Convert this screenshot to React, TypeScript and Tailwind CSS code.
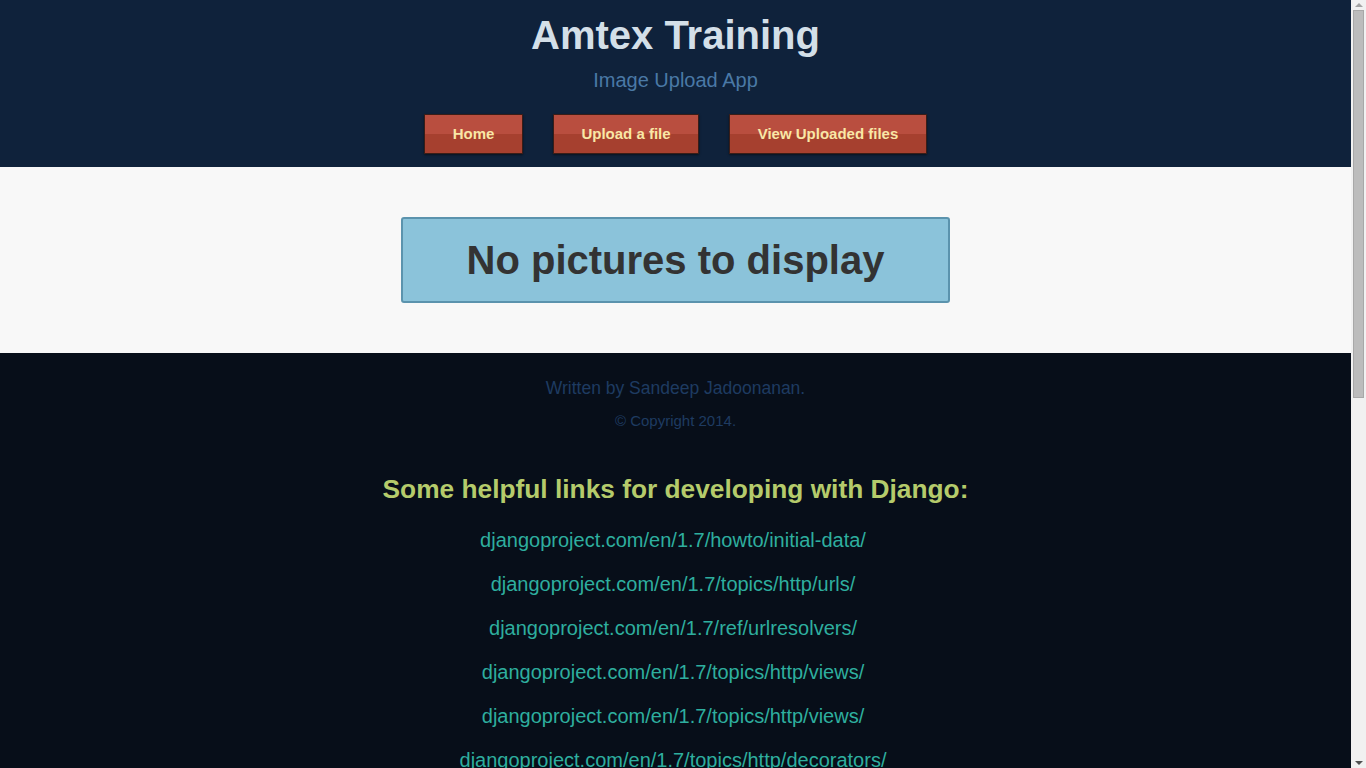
const links = [
  'djangoproject.com/en/1.7/howto/initial-data/',
  'djangoproject.com/en/1.7/topics/http/urls/',
  'djangoproject.com/en/1.7/ref/urlresolvers/',
  'djangoproject.com/en/1.7/topics/http/views/',
  'djangoproject.com/en/1.7/topics/http/views/',
  'djangoproject.com/en/1.7/topics/http/decorators/',
  'djangoproject.com/en/1.7/topics/http/file-uploads/',
  'djangoproject.com/en/1.7/ref/files/uploads/',
  'djangoproject.com/en/1.7/topics/files/',
  'djangoproject.com/en/1.7/ref/models/fields/',
  'djangoproject.com/en/1.7/topics/forms/',
  'djangoproject.com/en/1.7/ref/forms/fields/',
  'djangoproject.com/en/1.7/topics/templates/',
  'djangoproject.com/en/1.7/ref/templates/builtins/',
  'djangoproject.com/en/1.7/howto/static-files/',
  'djangoproject.com/en/1.7/ref/settings/',
  'djangoproject.com/en/1.7/ref/contrib/admin/',
  'djangoproject.com/en/1.7/intro/tutorial01/',
];

const navItems = [
  { label: 'Home', width: 'w-[99px]' },
  { label: 'Upload a file', width: 'w-[146px]' },
  { label: 'View Uploaded files', width: 'w-[198px]' },
];

// window scrollbar, as shown in the screenshot
function Scrollbar() {
  return (
    <div className="w-[15px] shrink-0 bg-[#f1f1f1] flex flex-col items-center">
      <div className="h-[10px] flex items-center justify-center">
        <svg width="8" height="4" viewBox="0 0 8 4"><path d="M0 4 L4 0 L8 4 Z" fill="#a3a3a3" /></svg>
      </div>
      <div className="w-[11px] h-[388px] bg-[#bcbcbc] border border-[#a8a8a8]" />
      <div className="flex-1" />
      <div className="h-[11px] flex items-center justify-center">
        <svg width="8" height="4" viewBox="0 0 8 4"><path d="M0 0 L8 0 L4 4 Z" fill="#505050" /></svg>
      </div>
    </div>
  );
}

export default function App() {
  return (
    <div className="h-screen flex overflow-hidden font-['Liberation_Sans',Arial,sans-serif]">
      <div className="flex-1 overflow-y-auto [scrollbar-width:none] text-center">
        {/* header */}
        <header className="bg-[#0f223b] pt-[13px] pb-[13px]">
          <h1 className="text-[40px] leading-[44px] font-bold text-[#d3dfe8]">Amtex Training</h1>
          <p className="mt-[11px] text-[20px] leading-[24px] text-[#4a79a6]">Image Upload App</p>
          <nav className="mt-[22px] flex justify-center gap-[30px]">
            {navItems.map(item => (
              <a
                key={item.label}
                href="#"
                className={`${item.width} h-[40px] flex items-center justify-center border border-[#3a1d17] bg-[linear-gradient(to_bottom,#b94e3f_50%,#a6402f_50%)] text-[15px] font-bold text-[#f9e7a6] shadow-[0_1px_2px_rgba(0,0,0,0.5)]`}
              >
                {item.label}
              </a>
            ))}
          </nav>
        </header>

        {/* main */}
        <main className="bg-[#f8f8f8] pt-[50px] pb-[50px] flex justify-center">
          <div className="w-[549px] h-[86px] flex items-center justify-center bg-[#8bc3da] border-2 border-[#5b93ad] rounded-[3px]">
            <h2 className="text-[40px] leading-[44px] font-bold text-[#333333] -mt-[1px]">No pictures to display</h2>
          </div>
        </main>

        {/* footer */}
        <footer className="bg-[#070e19] pt-[23px] pb-[92px]">
          <p className="text-[17.5px] leading-[24px] text-[#1e3b61]">Written by Sandeep Jadoonanan.</p>
          <p className="mt-[11px] text-[15px] leading-[20px] text-[#1e3b61]">© Copyright 2014.</p>
          <h3 className="mt-[42px] text-[26.3px] leading-[32px] font-bold text-[#b5cb6b]">
            Some helpful links for developing with Django:
          </h3>
          <ul className="mt-[23px] pr-[5px] flex flex-col items-center gap-[20px]">
            {links.map((link, i) => (
              <li key={i} className="text-[20px] leading-[24px]">
                <a href="#" className="text-[#2eae9f]">{link}</a>
              </li>
            ))}
          </ul>
        </footer>
      </div>
      <Scrollbar />
    </div>
  );
}
